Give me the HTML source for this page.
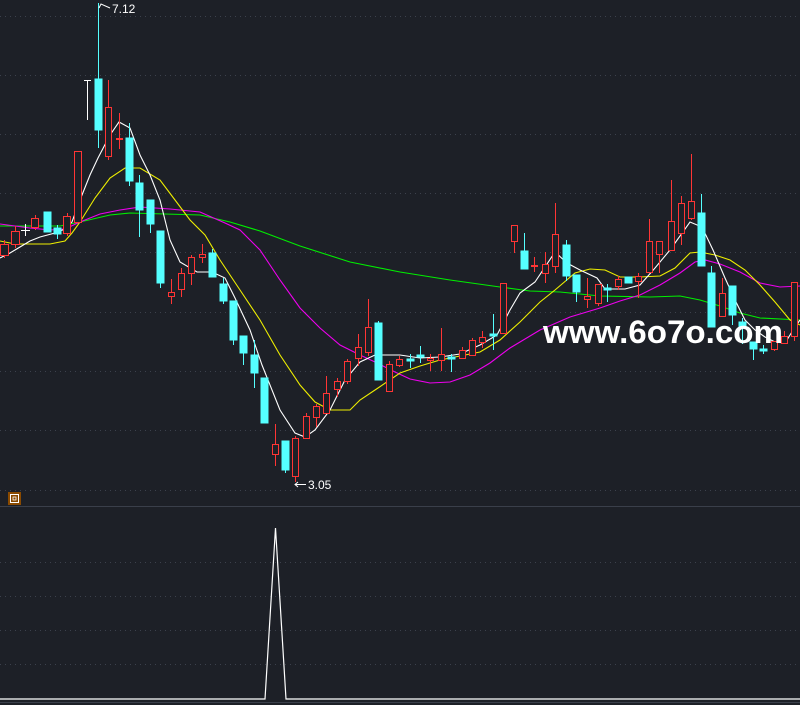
<!DOCTYPE html>
<html><head><meta charset="utf-8"><style>
html,body{margin:0;padding:0;background:#1d2027;overflow:hidden}
svg{display:block}
</style></head><body>
<svg width="800" height="705" viewBox="0 0 800 705" xmlns="http://www.w3.org/2000/svg">
<rect width="800" height="705" fill="#1d2027"/>
<g stroke="#3c414c" stroke-width="1" stroke-dasharray="1 4">
<line x1="0" y1="16.5" x2="800" y2="16.5"/><line x1="0" y1="75.5" x2="800" y2="75.5"/><line x1="0" y1="134.5" x2="800" y2="134.5"/><line x1="0" y1="193.5" x2="800" y2="193.5"/><line x1="0" y1="252.5" x2="800" y2="252.5"/><line x1="0" y1="312.5" x2="800" y2="312.5"/><line x1="0" y1="371.5" x2="800" y2="371.5"/><line x1="0" y1="430.5" x2="800" y2="430.5"/><line x1="0" y1="490.5" x2="800" y2="490.5"/>
<line x1="0" y1="562.5" x2="800" y2="562.5"/><line x1="0" y1="596.5" x2="800" y2="596.5"/><line x1="0" y1="630.5" x2="800" y2="630.5"/><line x1="0" y1="664.5" x2="800" y2="664.5"/>
</g>
<line x1="0" y1="506.5" x2="800" y2="506.5" stroke="#3a3f4a"/>
<line x1="0" y1="702.5" x2="800" y2="702.5" stroke="#3a3f4a"/>
<!-- MA lines -->
<g fill="none" stroke-width="1.1">
<polyline stroke="#00ee00" points="0,226 60,226 80,222 110,215 130,213 200,215 230,222 260,231 300,246 350,262 400,272 450,280 500,287 530,291 560,292 600,296 650,297 680,296 700,300 720,306 740,313 760,318 800,320"/>
<polyline stroke="#ee00ee" points="0,224 30,228 50,230 65,229 80,222 100,214 120,210 140,207 170,209 200,212 225,223 240,230 260,250 280,280 300,308 320,328 340,345 360,355 375,362 395,372 410,379 430,383 450,382 470,375 490,363 510,348 540,330 570,317 600,308 620,301 640,295 660,285 680,273 695,262 705,260 720,264 740,272 760,283 780,287 800,286"/>
<polyline stroke="#eeee00" points="0,241 10,243 20,244 50,244 65,241 72,233 80,222 95,198 110,178 125,168 140,168 160,180 175,200 190,220 205,235 220,260 240,290 260,320 280,355 300,385 315,402 330,410 350,410 360,400 378,388 400,373 420,366 440,360 460,356 480,352 500,340 520,322 540,302 555,290 575,273 590,269 605,270 620,277 640,277 660,276 675,268 690,253 700,252 715,255 730,260 745,270 760,285 775,302 790,320 800,325"/>
<polyline stroke="#ffffff" points="0,258 10,253 20,247 30,241 40,237 55,233 65,229 72,222 80,200 90,175 98,158 110,135 119,122 130,128 140,155 150,175 160,200 170,240 180,262 197,272 212,272 225,278 235,298 250,330 262,365 280,410 295,433 305,437 315,430 330,410 345,380 360,362 375,355 400,355 420,358 440,357 460,354 480,345 497,335 510,310 520,293 535,282 555,252 567,263 580,270 597,278 605,289 625,289 640,285 655,268 670,250 690,222 702,227 713,250 725,278 735,300 745,320 755,330 765,337 775,342 785,343 795,327 800,320"/>
</g>
<!-- candles -->
<g stroke="#ff3535" fill="#1d2027" stroke-width="1">
<line x1="4.5" y1="240" x2="4.5" y2="258"/><rect x="0.5" y="244.5" width="8" height="11"/>
<line x1="15.5" y1="226" x2="15.5" y2="248"/><rect x="11.5" y="231.5" width="8" height="13"/>
<line x1="35.5" y1="215" x2="35.5" y2="230"/><rect x="31.5" y="218.5" width="7" height="9"/>
<line x1="67.5" y1="213" x2="67.5" y2="236"/><rect x="63.5" y="216.5" width="7" height="17"/>
<rect x="74.5" y="151.5" width="7" height="71"/>
<line x1="108.5" y1="80" x2="108.5" y2="160"/><rect x="105.5" y="107.5" width="6" height="49"/>
<line x1="119.5" y1="113" x2="119.5" y2="149"/><line x1="116" y1="139" x2="123" y2="139" stroke-width="2"/>
<line x1="171.5" y1="279" x2="171.5" y2="304"/><rect x="168.5" y="292.5" width="6" height="4"/>
<line x1="181.5" y1="268" x2="181.5" y2="297"/><rect x="178.5" y="273.5" width="6" height="16"/>
<line x1="191.5" y1="255" x2="191.5" y2="285"/><rect x="188.5" y="257.5" width="6" height="16"/>
<line x1="202.5" y1="244" x2="202.5" y2="263"/><rect x="199.5" y="254.5" width="6" height="3"/>
<line x1="275.5" y1="424" x2="275.5" y2="466"/><rect x="272.5" y="444.5" width="6" height="10"/>
<line x1="295.5" y1="436" x2="295.5" y2="482"/><rect x="292.5" y="438.5" width="6" height="38"/>
<line x1="306.5" y1="413" x2="306.5" y2="438"/><rect x="303.5" y="416.5" width="6" height="22"/>
<line x1="316.5" y1="404" x2="316.5" y2="427"/><rect x="313.5" y="406.5" width="6" height="11"/>
<line x1="326.5" y1="376" x2="326.5" y2="413"/><rect x="323.5" y="393.5" width="6" height="20"/>
<line x1="337.5" y1="378" x2="337.5" y2="397"/><rect x="334.5" y="381.5" width="6" height="8"/>
<line x1="347.5" y1="359" x2="347.5" y2="384"/><rect x="344.5" y="361.5" width="6" height="20"/>
<line x1="358.5" y1="334" x2="358.5" y2="366"/><rect x="355.5" y="347.5" width="6" height="11"/>
<line x1="368.5" y1="299" x2="368.5" y2="356"/><rect x="365.5" y="327.5" width="6" height="25"/>
<line x1="389.5" y1="361" x2="389.5" y2="391"/><rect x="386.5" y="364.5" width="6" height="27"/>
<line x1="399.5" y1="356" x2="399.5" y2="367"/><rect x="396.5" y="359.5" width="6" height="6"/>
<line x1="430.5" y1="354" x2="430.5" y2="371"/><rect x="427.5" y="358.5" width="6" height="2"/>
<line x1="441.5" y1="328" x2="441.5" y2="371"/><rect x="438.5" y="354.5" width="6" height="6"/>
<line x1="462.5" y1="347" x2="462.5" y2="358"/><rect x="459.5" y="350.5" width="6" height="8"/>
<line x1="472.5" y1="338" x2="472.5" y2="355"/><rect x="469.5" y="340.5" width="6" height="15"/>
<line x1="482.5" y1="331" x2="482.5" y2="348"/><rect x="479.5" y="337.5" width="6" height="5"/>
<rect x="500.5" y="283.5" width="6" height="50"/>
<line x1="514.5" y1="225" x2="514.5" y2="253"/><rect x="511.5" y="225.5" width="6" height="16"/>
<line x1="534.5" y1="257" x2="534.5" y2="272"/><line x1="531" y1="266" x2="538" y2="266" stroke-width="2"/>
<line x1="545.5" y1="252" x2="545.5" y2="283"/><rect x="542.5" y="264.5" width="6" height="9"/>
<line x1="555.5" y1="203" x2="555.5" y2="273"/><rect x="552.5" y="234.5" width="6" height="32"/>
<line x1="587.5" y1="278" x2="587.5" y2="308"/><rect x="584.5" y="296.5" width="6" height="3"/>
<line x1="598.5" y1="284" x2="598.5" y2="306"/><rect x="595.5" y="284.5" width="6" height="19"/>
<line x1="618.5" y1="276" x2="618.5" y2="290"/><rect x="615.5" y="279.5" width="6" height="7"/>
<line x1="638.5" y1="273" x2="638.5" y2="298"/><rect x="635.5" y="276.5" width="6" height="5"/>
<line x1="649.5" y1="219" x2="649.5" y2="272"/><rect x="646.5" y="241.5" width="6" height="31"/>
<line x1="659.5" y1="241" x2="659.5" y2="273"/><rect x="656.5" y="241.5" width="6" height="13"/>
<line x1="671.5" y1="180" x2="671.5" y2="250"/><rect x="668.5" y="221.5" width="6" height="29"/>
<line x1="681.5" y1="196" x2="681.5" y2="245"/><rect x="678.5" y="203.5" width="6" height="30"/>
<line x1="691.5" y1="154" x2="691.5" y2="220"/><rect x="688.5" y="201.5" width="6" height="17"/>
<line x1="722.5" y1="278" x2="722.5" y2="316"/><rect x="719.5" y="293.5" width="6" height="23"/>
<line x1="774.5" y1="341" x2="774.5" y2="351"/><rect x="771.5" y="341.5" width="6" height="8"/>
<line x1="784.5" y1="331" x2="784.5" y2="343"/><rect x="781.5" y="336.5" width="6" height="7"/>
<line x1="794.5" y1="282" x2="794.5" y2="341"/><rect x="791.5" y="282.5" width="6" height="54"/>
</g>
<g stroke="#55ffff" fill="#55ffff" stroke-width="1">
<line x1="47.5" y1="212" x2="47.5" y2="232"/><rect x="44" y="212" width="7" height="20"/>
<line x1="57.5" y1="225" x2="57.5" y2="239"/><rect x="54" y="228" width="7" height="6"/>
<line x1="98.5" y1="3" x2="98.5" y2="148"/><rect x="95" y="79" width="7" height="51"/>
<line x1="129.5" y1="123" x2="129.5" y2="186"/><rect x="126" y="138" width="7" height="43"/>
<line x1="139.5" y1="175" x2="139.5" y2="237"/><rect x="136" y="183" width="7" height="27"/>
<line x1="150.5" y1="200" x2="150.5" y2="233"/><rect x="147" y="200" width="7" height="24"/>
<line x1="160.5" y1="231" x2="160.5" y2="288"/><rect x="157" y="231" width="7" height="52"/>
<line x1="212.5" y1="249" x2="212.5" y2="277"/><rect x="209" y="253" width="7" height="24"/>
<line x1="223.5" y1="278" x2="223.5" y2="304"/><rect x="220" y="284" width="7" height="17"/>
<line x1="233.5" y1="301" x2="233.5" y2="345"/><rect x="230" y="301" width="7" height="39"/>
<line x1="243.5" y1="336" x2="243.5" y2="365"/><rect x="240" y="336" width="7" height="17"/>
<line x1="254.5" y1="340" x2="254.5" y2="388"/><rect x="251" y="355" width="7" height="18"/>
<rect x="261" y="378" width="7" height="45"/>
<line x1="285.5" y1="441" x2="285.5" y2="473"/><rect x="282" y="441" width="7" height="29"/>
<line x1="378.5" y1="321" x2="378.5" y2="380"/><rect x="375" y="323" width="7" height="57"/>
<line x1="410.5" y1="354" x2="410.5" y2="368"/><rect x="407" y="359" width="7" height="2"/>
<line x1="420.5" y1="346" x2="420.5" y2="363"/><rect x="417" y="355" width="7" height="2"/>
<line x1="451.5" y1="354" x2="451.5" y2="372"/><rect x="448" y="357" width="7" height="2"/>
<line x1="493.5" y1="314" x2="493.5" y2="350"/><rect x="490" y="334" width="7" height="2"/>
<line x1="524.5" y1="233" x2="524.5" y2="269"/><rect x="521" y="251" width="7" height="18"/>
<line x1="566.5" y1="240" x2="566.5" y2="281"/><rect x="563" y="245" width="7" height="31"/>
<line x1="576.5" y1="275" x2="576.5" y2="302"/><rect x="573" y="275" width="7" height="17"/>
<line x1="607.5" y1="284" x2="607.5" y2="302"/><rect x="604" y="288" width="7" height="2"/>
<rect x="625" y="277" width="7" height="6"/>
<line x1="701.5" y1="194" x2="701.5" y2="266"/><rect x="698" y="213" width="7" height="53"/>
<line x1="711.5" y1="266" x2="711.5" y2="327"/><rect x="708" y="273" width="7" height="54"/>
<line x1="732.5" y1="286" x2="732.5" y2="325"/><rect x="729" y="286" width="7" height="29"/>
<line x1="742.5" y1="318" x2="742.5" y2="344"/><rect x="739" y="322" width="7" height="6"/>
<line x1="753.5" y1="342" x2="753.5" y2="360"/><rect x="750" y="342" width="7" height="7"/>
<line x1="763.5" y1="345" x2="763.5" y2="354"/><rect x="760" y="349" width="7" height="2"/>
</g>
<g stroke="#ffffff">
<line x1="25.5" y1="224" x2="25.5" y2="236"/><line x1="21" y1="230.5" x2="30" y2="230.5"/>
<line x1="87.5" y1="80" x2="87.5" y2="120"/><line x1="84" y1="80.5" x2="91" y2="80.5"/>
</g>
<!-- labels -->
<polyline points="99,8 101,4 110,8" fill="none" stroke="#ffffff"/>
<text x="112" y="13" font-family="Liberation Sans, sans-serif" font-size="12" fill="#ffffff">7.12</text>
<line x1="295" y1="484.5" x2="306" y2="484.5" stroke="#ffffff"/><polyline points="298,482 295,484.5 298,487" fill="none" stroke="#ffffff"/>
<text x="308" y="489" font-family="Liberation Sans, sans-serif" font-size="12" fill="#ffffff">3.05</text>
<text x="543" y="343" font-family="Liberation Sans, sans-serif" font-weight="bold" font-size="32" fill="#ffffff" textLength="240" lengthAdjust="spacingAndGlyphs">www.6o7o.com</text>
<!-- icon -->
<rect x="8" y="492" width="13" height="13" fill="#8a4a00"/>
<rect x="10.5" y="494.5" width="8" height="8" fill="none" stroke="#ffffff"/>
<rect x="13" y="497" width="3" height="3" fill="none" stroke="#ffffff" stroke-width="0.8"/>
<!-- bottom indicator -->
<polyline points="0,699 265,699 275.5,528 286,699 800,699" fill="none" stroke="#ffffff" stroke-width="1.2"/>
</svg>
</body></html>
